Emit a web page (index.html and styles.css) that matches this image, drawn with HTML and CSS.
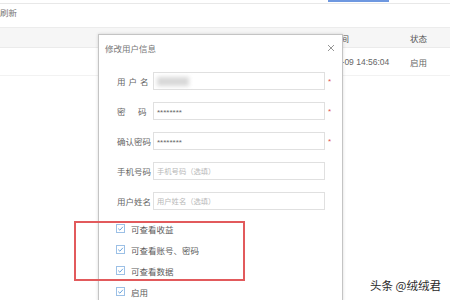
FILE: index.html
```html
<!DOCTYPE html>
<html lang="zh-CN">
<head>
  <meta charset="UTF-8">
  <title>修改用户信息</title>
  <link rel="stylesheet" href="styles.css">
</head>
<body>
  <div class="page">
    <div class="tabs"><span class="tab-active"></span></div>
    <div class="toolbar"><span class="refresh">刷新</span></div>
    <div class="grid head">
      <span></span><span>用户姓名</span><span>创建日期</span><span>创建时间</span><span>状态</span>
    </div>
    <div class="grid row">
      <span></span><span></span><span>2018-11-09</span><span>2018-11-09 14:56:04</span><span>启用</span>
    </div>
  </div>

  <div class="modal">
    <div class="modal-head">
      <span class="modal-title">修改用户信息</span>
      <svg class="close" width="8" height="8" viewBox="0 0 8 8"><path d="M1 1L7 7M7 1L1 7" stroke="#8a8a8a" stroke-width="0.9" fill="none"/></svg>
    </div>
    <div class="form">
      <div class="field">
        <label class="wide">用户名</label>
        <div class="input"><span class="blur"></span></div>
        <span class="req">*</span>
      </div>
      <div class="field">
        <label class="pw">密　码</label>
        <div class="input"><span class="stars">********</span></div>
        <span class="req">*</span>
      </div>
      <div class="field">
        <label>确认密码</label>
        <div class="input"><span class="stars">********</span></div>
        <span class="req">*</span>
      </div>
      <div class="field">
        <label>手机号码</label>
        <div class="input"><span class="ph">手机号码（选填）</span></div>
      </div>
      <div class="field">
        <label>用户姓名</label>
        <div class="input"><span class="ph">用户姓名（选填）</span></div>
      </div>
    </div>
    <div class="checks">
      <div class="check"><span class="box"><svg width="7" height="7" viewBox="0 0 7 7"><path d="M1.2 3.6L2.9 5.2L5.9 1.8" stroke="#5a9ad8" stroke-width="0.9" fill="none"/></svg></span>可查看收益</div>
      <div class="check"><span class="box"><svg width="7" height="7" viewBox="0 0 7 7"><path d="M1.2 3.6L2.9 5.2L5.9 1.8" stroke="#5a9ad8" stroke-width="0.9" fill="none"/></svg></span>可查看账号、密码</div>
      <div class="check"><span class="box"><svg width="7" height="7" viewBox="0 0 7 7"><path d="M1.2 3.6L2.9 5.2L5.9 1.8" stroke="#5a9ad8" stroke-width="0.9" fill="none"/></svg></span>可查看数据</div>
      <div class="check"><span class="box"><svg width="7" height="7" viewBox="0 0 7 7"><path d="M1.2 3.6L2.9 5.2L5.9 1.8" stroke="#5a9ad8" stroke-width="0.9" fill="none"/></svg></span>启用</div>
    </div>
  </div>

  <div class="highlight"></div>
  <div class="watermark">头条 @绒绒君</div>
</body>
</html>
```

FILE: styles.css
```css
* {
  box-sizing: border-box;
}

html, body {
  margin: 0;
  padding: 0;
  width: 450px;
  height: 300px;
  overflow: hidden;
  background: #fff;
  font-family: "Liberation Sans", "Noto Sans CJK SC", sans-serif;
  font-size: 8.5px;
  color: #666;
}

body {
  position: relative;
}

/* background list page */
.tabs {
  height: 4px;
  border-bottom: 1px solid #e8e8e8;
  padding-left: 328px;
}

.tab-active {
  display: block;
  width: 61px;
  height: 2px;
  background: #6e98e0;
}

.toolbar {
  height: 24px;
  padding-top: 4px;
  line-height: 10px;
  border-bottom: 1px solid #ececec;
}

.refresh {
  color: #777;
}

.grid {
  display: grid;
  grid-template-columns: 140px 85px 85px 95px 45px;
  align-items: center;
}

.grid span {
  padding-left: 5px;
  white-space: nowrap;
}

.head {
  height: 20px;
  background: #f6f6f6;
  border-bottom: 1px solid #ebebeb;
  color: #555;
}

.row {
  height: 28px;
  border-bottom: 1px solid #f2f2f2;
}

.row span:nth-child(4) {
  padding-left: 1px;
}

/* dialog */
.modal {
  position: absolute;
  left: 98px;
  top: 34px;
  width: 245px;
  height: 268px;
  background: #fff;
  border: 1px solid #c4c4c4;
  box-shadow: 0 0 3px rgba(0, 0, 0, 0.15);
}

.modal-head {
  height: 26px;
  display: flex;
  align-items: center;
  justify-content: space-between;
  padding: 0 7px 0 6px;
}

.modal-title {
  color: #777;
}

.form {
  margin-top: 11px;
  padding-left: 18px;
  display: flex;
  flex-direction: column;
  gap: 12px;
}

.field {
  display: flex;
  align-items: center;
  height: 18px;
}

.field label {
  width: 36px;
  color: #666;
  white-space: nowrap;
}

.field label.wide {
  letter-spacing: 3px;
}

.field label.pw {
  letter-spacing: 2px;
}

.input {
  width: 172px;
  height: 18px;
  border: 1px solid #e0e0e0;
  display: flex;
  align-items: center;
  padding-left: 3px;
}

.blur {
  width: 32px;
  height: 9px;
  background: #d8d8d8;
  filter: blur(2px);
}

.stars {
  font-size: 8px;
  color: #666;
  padding-top: 2px;
}

.ph {
  font-size: 7.3px;
  color: #b8b8b8;
}

.req {
  margin-left: 3px;
  color: #e05050;
  font-size: 8px;
}

.checks {
  margin-top: 8px;
  padding-left: 17px;
}

.check {
  height: 21px;
  display: flex;
  align-items: center;
  gap: 6px;
  color: #5a5a5a;
}

.box {
  width: 9px;
  height: 9px;
  border: 1px solid #9cc0e6;
  display: flex;
  align-items: center;
  justify-content: center;
}

/* overlays on top of the screenshot */
.highlight {
  position: absolute;
  left: 74px;
  top: 221px;
  width: 171px;
  height: 60px;
  border: 2px solid #e25a5c;
}

.watermark {
  position: absolute;
  left: 370px;
  top: 278px;
  font-family: "Noto Sans CJK SC", sans-serif;
  font-size: 11.5px;
  line-height: 14px;
  color: #2a2a2a;
  text-shadow: 0 0 2px #fff, 0 0 2px #fff;
  white-space: nowrap;
}
```
